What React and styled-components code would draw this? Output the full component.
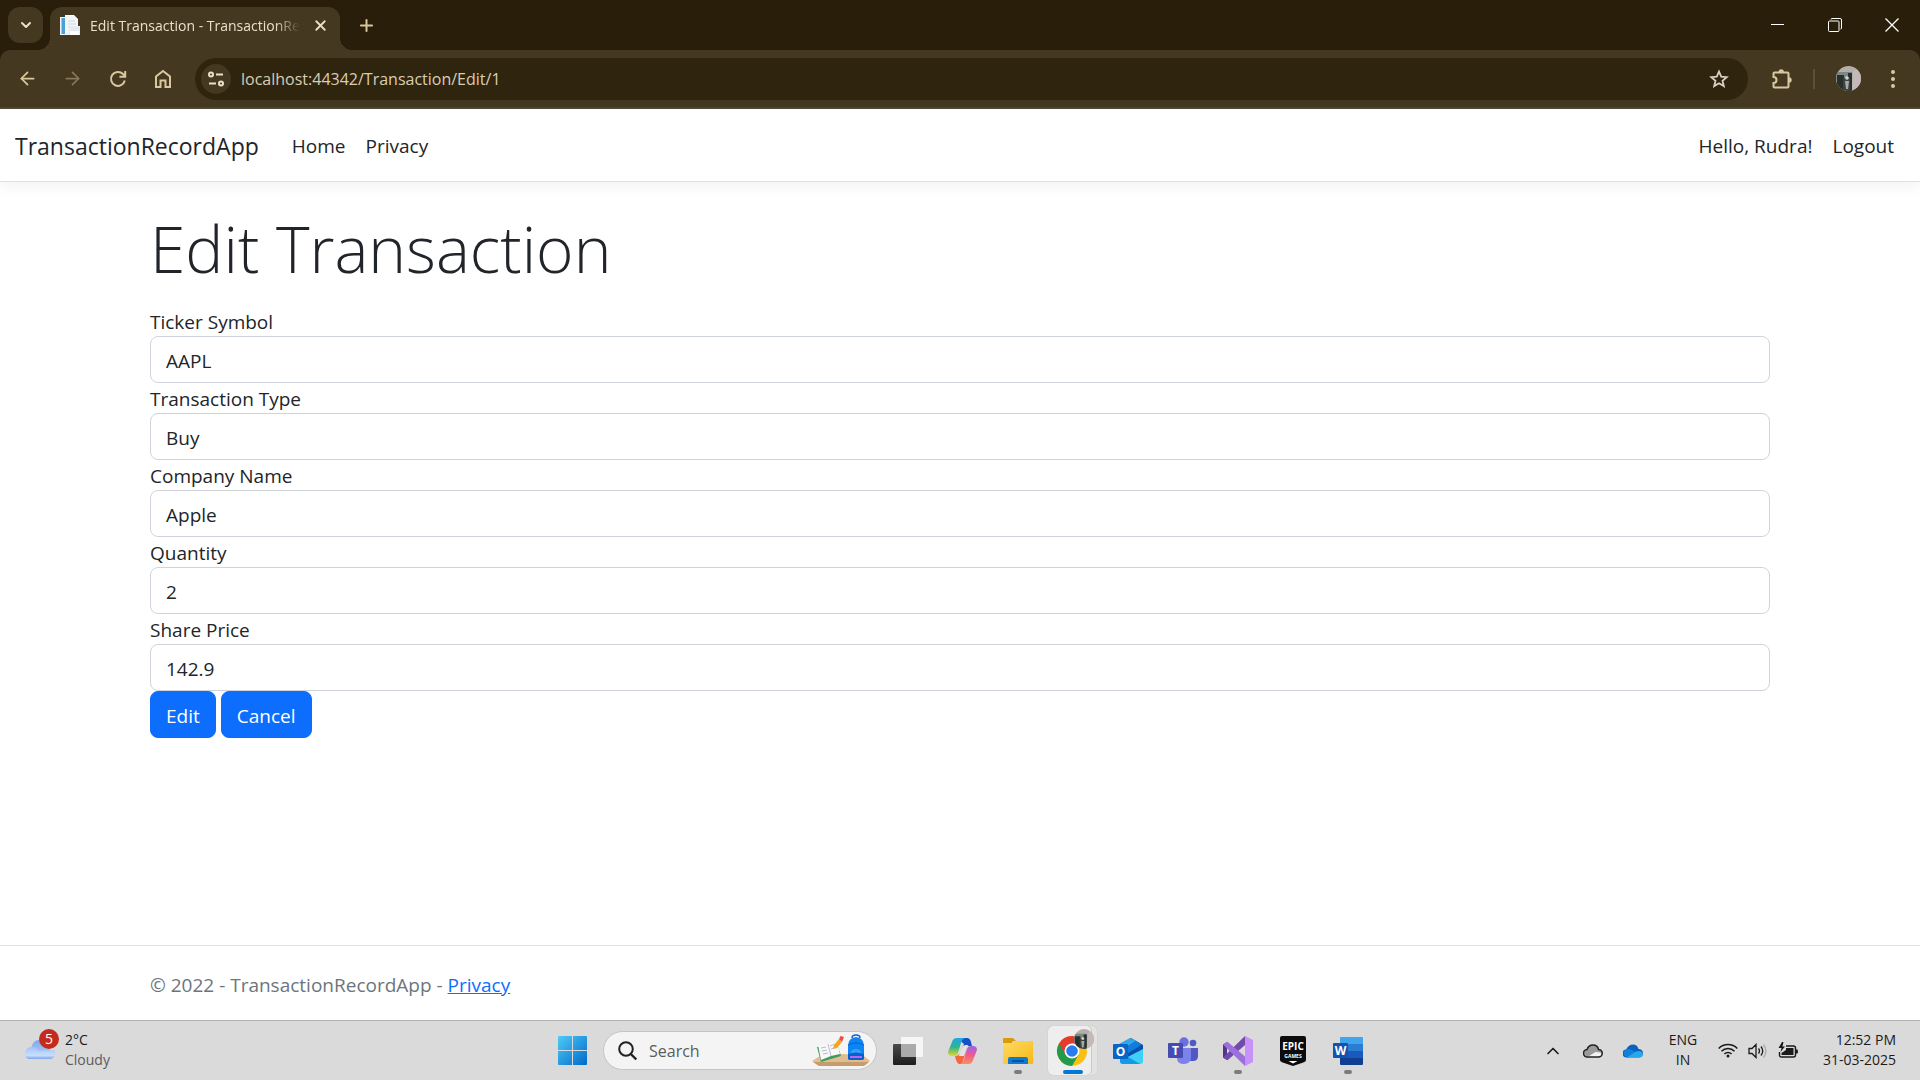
import React from 'react';
import styled, { createGlobalStyle } from 'styled-components';
import { ArrowLeft, ArrowRight, ChevronDown, ChevronUp, X, Plus } from 'lucide-react';

const uiFont = '"Open Sans", "Noto Sans", sans-serif';

const GlobalStyle = createGlobalStyle`
  *, *::before, *::after { box-sizing: border-box; }
  html, body, #root { height: 100%; }
  body { margin: 0; overflow: hidden; background: #fff; color: #212529; font-family: ${uiFont}; font-size: 19px; line-height: 30px; }
  button, input { font: inherit; color: inherit; }
  svg { display: block; flex: none; }
`;

const Desktop = styled.div`
  height: 100vh;
  display: flex;
  flex-direction: column;
`;

/* Browser chrome */

const TabStrip = styled.div`
  height: 50px;
  display: flex;
  align-items: center;
  padding: 0 0 0 8px;
  background: #281e0a;
  color: #e9dfcb;
  flex: none;
`;

const PlainButton = styled.button`
  width: ${(p) => p.$w || 36}px;
  height: ${(p) => p.$h || 36}px;
  padding: 0;
  border: 0;
  display: flex;
  align-items: center;
  justify-content: center;
  flex: none;
  background: ${(p) => p.$bg || 'transparent'};
  border-radius: ${(p) => p.$radius || 0}px;
  color: ${(p) => p.$color || 'inherit'};
`;

const Tab = styled.div`
  width: 290px;
  height: 43px;
  margin: 7px 0 0 7px;
  padding: 0 10px 6px;
  display: flex;
  align-items: center;
  gap: 10px;
  border-radius: 12px 12px 0 0;
  background: #453820;
  position: relative;
  &::before, &::after {
    content: '';
    position: absolute;
    bottom: 0;
    width: 12px;
    height: 12px;
  }
  &::before { left: -12px; background: radial-gradient(circle at 0 0, transparent 12px, #453820 12px); }
  &::after { right: -12px; background: radial-gradient(circle at 100% 0, transparent 12px, #453820 12px); }
`;

const TabTitle = styled.span`
  flex: 1;
  font-size: 14px;
  white-space: nowrap;
  overflow: hidden;
  mask-image: linear-gradient(90deg, #000 88%, transparent);
`;

const WindowControls = styled.div`
  display: flex;
  margin-left: auto;
  color: #fff;
`;

const ToolbarFrame = styled.div`
  background: #281e0a;
  flex: none;
`;

const Toolbar = styled.div`
  height: 59px;
  display: flex;
  align-items: center;
  padding: 0 0 0 5px;
  background: #453820;
  border-radius: 10px 10px 0 0;
  border-bottom: 2px solid #4f463a;
  color: #d8c8a0;
`;

const AddressBar = styled.div`
  flex: 1;
  height: 42px;
  margin-left: 10px;
  padding: 0 11px 0 6px;
  display: flex;
  align-items: center;
  gap: 10px;
  border-radius: 21px;
  background: #2f240e;
  color: #e9dfcb;
`;

const AddressInput = styled.input`
  flex: 1;
  min-width: 0;
  height: 30px;
  padding: 0;
  border: 0;
  outline: 0;
  background: transparent;
  color: #d9ceb4;
  font-size: 16px;
`;

const ToolbarEnd = styled.div`
  display: flex;
  align-items: center;
  padding-left: 16px;
`;

const Divider = styled.span`
  width: 2px;
  height: 20px;
  margin: 0 15px 0 13px;
  background: #5f5030;
`;

/* Page */

const Page = styled.div`
  flex: 1;
  min-height: 0;
  display: flex;
  flex-direction: column;
`;

const Navbar = styled.nav`
  height: 73px;
  padding: 2px 16px 0 15px;
  display: flex;
  align-items: center;
  border-bottom: 1px solid #dee2e6;
  box-shadow: 0 5px 15px rgba(0, 0, 0, 0.05);
  flex: none;
`;

const Brand = styled.a`
  margin-right: 23px;
  font-size: 23px;
  color: #212529;
  text-decoration: none;
`;

const NavItem = styled.a`
  padding: 0 10px;
  color: #212529;
  text-decoration: none;
`;

const NavEnd = styled.div`
  display: flex;
  margin-left: auto;
`;

const Container = styled.div`
  width: 100%;
  max-width: 1650px;
  margin: 0 auto;
  padding: 0 15px;
`;

const Main = styled.main`
  flex: 1;
  padding-top: 24px;
`;

const Title = styled.h1`
  margin: 0 0 14px;
  font-size: 64px;
  line-height: 86px;
  font-weight: 300;
`;

const Field = styled.div`
  display: flex;
  flex-direction: column;
  label { padding-top: 2px; line-height: 28px; }
`;

const Control = styled.input`
  width: 100%;
  height: 47px;
  padding: 3px 15px 0;
  border: 1px solid #ced4da;
  border-radius: 8px;
  background: #fff;
`;

const Actions = styled.div`
  display: flex;
  gap: 5px;
`;

const Action = styled.button`
  height: 47px;
  padding: 3px 15px 0;
  border: 1px solid #0d6efd;
  border-radius: 8px;
  background: #0d6efd;
  color: #fff;
`;

const Footer = styled.footer`
  height: 75px;
  display: flex;
  align-items: center;
  padding-top: 4px;
  border-top: 1px solid #dee2e6;
  color: #6c757d;
  flex: none;
  a { color: #0d6efd; }
`;

/* Taskbar */

const Taskbar = styled.div`
  height: 60px;
  display: grid;
  grid-template-columns: 1fr auto 1fr;
  align-items: center;
  background: #dadada;
  border-top: 1px solid #b0b0b0;
  color: #1b1b1b;
  font-size: 14px;
  line-height: 20px;
  flex: none;
`;

const Weather = styled.button`
  display: flex;
  align-items: center;
  gap: 5px;
  padding: 0 0 0 24px;
  border: 0;
  background: none;
  text-align: left;
`;

const WeatherIcon = styled.span`
  position: relative;
  width: 36px;
  height: 36px;
  margin-bottom: 8px;
`;

const Badge = styled.span`
  position: absolute;
  top: 0;
  right: 1px;
  width: 20px;
  height: 20px;
  border-radius: 10px;
  background: #c42b1c;
  color: #fff;
  font-size: 14px;
  text-align: center;
`;

const Lines = styled.span`
  display: flex;
  flex-direction: column;
  padding-bottom: 2px;
  text-align: ${(p) => p.$align || 'left'};
`;

const Muted = styled.span`
  color: #5c5c5c;
`;

const Apps = styled.div`
  display: flex;
  align-items: center;
  height: 59px;
`;

const SearchBox = styled.label`
  width: 274px;
  height: 39px;
  margin: 0 3px;
  padding: 0 6px 0 14px;
  display: flex;
  align-items: center;
  gap: 12px;
  border: 1px solid #c4c4c4;
  border-radius: 20px;
  background: #f4f4f4;
`;

const SearchInput = styled.input`
  flex: 1;
  min-width: 0;
  padding: 0;
  border: 0;
  outline: 0;
  background: transparent;
  font-size: 16px;
  &::placeholder { color: #5c5c5c; opacity: 1; }
`;

const AppButton = styled.button`
  position: relative;
  width: 49px;
  height: 49px;
  margin: 0 3px;
  padding: 0;
  border: 0;
  display: flex;
  align-items: center;
  justify-content: center;
  border-radius: 5px;
  background: ${(p) => (p.$active ? '#eeeeee' : 'transparent')};
  box-shadow: ${(p) => (p.$active ? 'inset -5px 0 0 #e2e2e2, inset -6px 0 0 #c9c9c9, 0 0 1px #aaa' : 'none')};
  &::after {
    content: '';
    position: absolute;
    bottom: 1px;
    width: ${(p) => (p.$active ? 20 : 8)}px;
    height: 4px;
    border-radius: 2px;
    background: ${(p) => (p.$active ? '#0078d4' : p.$open ? '#7c7c7c' : 'transparent')};
  }
`;

const Tray = styled.div`
  display: flex;
  align-items: center;
  justify-content: flex-end;
  padding-right: 24px;
`;

const TrayCell = styled.button`
  width: ${(p) => p.$w}px;
  padding: 0;
  border: 0;
  background: none;
  display: flex;
  justify-content: center;
`;

const Clock = styled.button`
  width: 93px;
  padding: 0;
  border: 0;
  background: none;
  display: flex;
  justify-content: flex-end;
`;

/* Drawings */

const Favicon = () => (
  <svg width="20" height="21" viewBox="0 0 20 21">
    <path d="M5 0h9l4 4v14H5z" fill="#fff" />
    <path d="M0 2h10v18H0z" fill="#f1f4f6" />
    <path d="M1.5 3h3.5v16H1.5z" fill="#4ba0d8" />
    <path d="M6 1h8l4 4v12H6z" fill="#f4f6f7" />
    <path d="M8 6h7M8 9h8M8 12h8" stroke="#cfd6db" />
    <path d="M10 11h10v9H8z" fill="#e4e8f0" />
    <path d="M10 16h9v4h-9z" fill="#fff" />
  </svg>
);

const Reload = () => (
  <svg width="18" height="18" viewBox="0 0 18 18" fill="none" stroke="currentColor" strokeWidth="2">
    <path d="M15.8 10.5A7 7 0 1 1 14 4l2 2M16.2 1v5.8h-5.8" />
  </svg>
);

const HomeIcon = () => (
  <svg width="18" height="20" viewBox="0 0 18 20" fill="none" stroke="currentColor" strokeWidth="2">
    <path d="M2 18V7.5L9 2l7 5.5V18h-4.5v-6.500h-5V18z" />
  </svg>
);

const Tune = () => (
  <svg width="16" height="16" viewBox="0 0 16 16" fill="none" stroke="currentColor" strokeWidth="2">
    <circle cx="3" cy="3.500" r="2" />
    <path d="M8 3.500h7M1 12.500h7" />
    <circle cx="13" cy="12.500" r="2" />
  </svg>
);

const StarIcon = () => (
  <svg width="20" height="20" viewBox="0 0 20 20" fill="none" stroke="#d9d0c2" strokeWidth="1.8">
    <path d="M10 2.500l2.200 5.100 5.500.5-4.200 3.600 1.300 5.400-4.800-2.900-4.800 2.900 1.300-5.400-4.200-3.600 5.500-.5z" />
  </svg>
);

const Puzzle = () => (
  <svg width="22" height="22" viewBox="0 0 22 22">
    <path d="M3.500 4.500h13a1 1 0 0 1 1 1v13a1 1 0 0 1-1 1h-13a1 1 0 0 1-1-1V15a3 3 0 0 0 0-6V5.500a1 1 0 0 1 1-1z" fill="none" stroke="currentColor" strokeWidth="2" />
    <path d="M7.500 4a2.700 2.700 0 0 1 5.400 0zM18 9.300a2.700 2.700 0 0 1 0 5.400z" fill="currentColor" />
  </svg>
);

const Avatar = ({ size }) => (
  <svg width={size} height={size} viewBox="0 0 25 25">
    <clipPath id={`face${size}`}><circle cx="12.500" cy="12.500" r="12.500" /></clipPath>
    <g clipPath={`url(#face${size})`}>
      <path d="M0 0h25v25H0z" fill="#b5adaa" />
      <path d="M0 6h16v19H0z" fill="#7c8780" />
      <path d="M1 9h7v16H1zM12 7h4v18h-4z" fill="#27302f" />
      <path d="M7 12h7v13H7z" fill="#3c4442" />
      <circle cx="11" cy="12" r="1.800" fill="#d5d5cf" />
      <path d="M9 15h4l-1 8h-2z" fill="#a9aaa5" />
      <path d="M17 5l8-3v23h-9z" fill="#c3b9b7" />
    </g>
  </svg>
);

const Dots = () => (
  <svg width="4" height="18" viewBox="0 0 4 18" fill="currentColor">
    <circle cx="2" cy="2" r="2" /><circle cx="2" cy="9" r="2" /><circle cx="2" cy="16" r="2" />
  </svg>
);

const CloudArt = () => (
  <svg width="32" height="36" viewBox="0 0 32 36">
    <defs>
      <linearGradient id="sky" x2="0" y2="1"><stop stopColor="#7fa8ec" /><stop offset="1" stopColor="#b9d3f9" /></linearGradient>
      <linearGradient id="puff" x2="0" y2="1"><stop stopColor="#a3c3f5" /><stop offset=".7" stopColor="#c8defb" /><stop offset="1" stopColor="#7fa4ec" /></linearGradient>
    </defs>
    <path d="M7 20C8 14 11 11 15 11c6 0 9 4 10 9a5 5 0 0 1 1 9H7z" fill="url(#sky)" />
    <path d="M1 25c0-4 3-7 6-7 4 0 6 2 8 4 5-1 9 0 16-1v3c0 4-2 6-6 6H6c-3 0-5-2-5-5z" fill="url(#puff)" />
  </svg>
);

const WindowsLogo = () => (
  <svg width="29" height="29" viewBox="0 0 29 29">
    <defs>
      <linearGradient id="win" x2="1" y2="1"><stop stopColor="#4fcbf8" /><stop offset="1" stopColor="#0069c9" /></linearGradient>
    </defs>
    <path d="M1 0H14v14H0V1A1 1 0 0 1 1 0zM15 0h13A1 1 0 0 1 29 1V14H15zM0 15h14V29H1A1 1 0 0 1 0 28zM15 15H29v13a1 1 0 0 1-1 1h-13z" fill="url(#win)" />
  </svg>
);

const SearchGlyph = () => (
  <svg width="19" height="20" viewBox="0 0 19 20" fill="none" stroke="#222" strokeWidth="2">
    <circle cx="8" cy="8" r="6.800" /><path d="M12.800 13l5.500 5.500" strokeWidth="2.400" />
  </svg>
);

const StudyArt = () => (
  <svg width="58" height="34" viewBox="0 0 58 34">
    <path d="M0 27l8-5q22-4 44 0l6 5-5 4H6z" fill="#e0bd93" />
    <path d="M1 28h56l-5 4H7z" fill="#c79b6c" />
    <path d="M5 13l20-4 4 13-20 6z" fill="#3f9c58" />
    <path d="M6 11l10-1 9-3 3 13-9 2-10 4z" fill="#f8f8fb" />
    <path d="M16 10l3 12M9 14l5-1M10 17l5-1M11 20l5-1M18 12l5-2M19 15l5-2" stroke="#b8bcc8" fill="none" />
    <path d="M21 15l1-4 5-6 3 3-5 6z" fill="#f8a51b" />
    <path d="M27 5l1.500-3 3.500 1-2 5z" fill="#ee4b4b" />
    <path d="M40 4q0-3 4-3t4 3" fill="none" stroke="#1460c8" strokeWidth="1.500" />
    <path d="M36 12q0-8 8-9 8 1 8 9v12q0 2-2 2H38q-2 0-2-2z" fill="#0b84f5" />
    <path d="M36 11q8-4 16 0" fill="none" stroke="#0a5fd0" />
    <path d="M38 22q0-7 6-7t6 7z" fill="#36a2fb" />
    <path d="M36 20q8-3 16 0v4q0 2-2 2H38q-2 0-2-2z" fill="#0a5fd0" />
    <path d="M38 22h12v2H38z" fill="#b46be8" />
  </svg>
);

const TaskView = () => (
  <svg width="30" height="30" viewBox="0 0 30 30">
    <defs>
      <linearGradient id="tv" x2="0" y2="1"><stop stopColor="#4a4a4a" /><stop offset="1" stopColor="#1c1c1c" /></linearGradient>
    </defs>
    <rect x="0" y="8" width="23" height="21" rx="1" fill="url(#tv)" />
    <rect x="8" y="1" width="22" height="20" rx="1" fill="#fff" opacity=".75" />
    <path d="M8 8h15v13H8z" fill="#9b9b9b" opacity=".7" />
  </svg>
);

const Copilot = () => (
  <svg width="30" height="28" viewBox="0 0 30 28">
    <defs>
      <linearGradient id="cpa" x2="0" y2="1"><stop stopColor="#1fa8e0" /><stop offset=".5" stopColor="#2bb58f" /><stop offset="1" stopColor="#e9d52a" /></linearGradient>
      <linearGradient id="cpb" x2="0" y2="1"><stop stopColor="#9a63ee" /><stop offset=".5" stopColor="#ee5a92" /><stop offset="1" stopColor="#f9935a" /></linearGradient>
    </defs>
    <path d="M9 1h10q3 0 4 4l1 4h-5q-3 0-4 3l-3 5 4-10z" fill="#1650c8" />
    <path d="M9 1h8q-3 1-4 5l-3 10q-1 3-4 3H4q-4 0-4-4L4 5q1-4 5-4z" fill="url(#cpa)" />
    <path d="M7 19q4 0 5-3l2-5h5l-5 16h-3q-2-1-3-4z" fill="#f3683b" />
    <path d="M12 15l2-4q1-3 4-3h2l-4 11h-5z" fill="#e4e1e4" />
    <path d="M21 27h-9q3-1 4-5l3-10q1-3 4-3h2q4 0 4 4l-4 10q-1 4-4 4z" fill="url(#cpb)" />
  </svg>
);

const Folder = () => (
  <svg width="30" height="28" viewBox="0 0 30 28">
    <defs>
      <linearGradient id="fo" x2="1" y2="1"><stop stopColor="#ffda65" /><stop offset="1" stopColor="#f7b915" /></linearGradient>
    </defs>
    <path d="M0 2q0-1 1-1h9l3 3h-3l-2 3H0z" fill="#d89b0b" />
    <path d="M0 6h9l3-2h17q1 0 1 1v21q0 1-1 1H1q-1 0-1-1z" fill="url(#fo)" />
    <path d="M5 27v-5q0-2 2-2h16q2 0 2 2v5z" fill="#0f7ad1" />
    <path d="M9 24h12" stroke="#07498c" strokeWidth="1.500" />
  </svg>
);

const Chrome = () => (
  <svg width="38" height="38" viewBox="0 0 38 38">
    <g transform="translate(0 2)">
      <circle cx="18" cy="17" r="15" fill="#fbbf12" />
      <path d="M18 17L5 9.500A15 15 0 0 0 18 32l6.500-11z" fill="#229a4c" />
      <path d="M18 17l-6.500 3.800L5 9.500A15 15 0 0 1 31 9.500H18z" fill="#e33b2e" />
      <circle cx="18" cy="17" r="7.500" fill="#fff" />
      <circle cx="18" cy="17" r="5.800" fill="#2a7bec" />
    </g>
  </svg>
);

const ProfileBadge = styled.span`
  position: absolute;
  top: 3px;
  right: 3px;
`;

const glyphFont = { fontFamily: uiFont, fontWeight: 700, fill: '#fff', textAnchor: 'middle' };

const Outlook = () => (
  <svg width="30" height="28" viewBox="0 0 30 28">
    <path d="M7 7L18 1l12 7v6L10 23z" fill="#0b50a8" />
    <path d="M6 7l11-6 6 3-14 9z" fill="#35a5ea" />
    <path d="M9 13l14-9 6 3.500-16 10z" fill="#0f7ddb" />
    <path d="M30 12v12q0 3-3 3H10q-3 0-3-3z" fill="#3fd0f8" />
    <path d="M7 15l20 12H10q-3 0-3-3z" fill="#169ae5" />
    <rect x="0" y="7" width="15" height="15" rx="1" fill="#0a64c4" />
    <text x="7.500" y="19" fontSize="12" {...glyphFont}>O</text>
  </svg>
);

const Teams = () => (
  <svg width="30" height="28" viewBox="0 0 30 28">
    <circle cx="16" cy="5" r="4.700" fill="#6a70df" /><circle cx="25" cy="6" r="3.300" fill="#5058c4" />
    <path d="M22 11h8v8q0 5-5 5h-4z" fill="#5058c4" />
    <path d="M9 11h14v9q0 7-7 7t-7-6z" fill="#7b83eb" />
    <rect x="0" y="6" width="15" height="15" rx="1" fill="#464bb4" />
    <text x="7.500" y="18" fontSize="12" {...glyphFont}>T</text>
  </svg>
);

const VisualStudio = () => (
  <svg width="30" height="30" viewBox="0 0 30 30">
    <path d="M0 8.500L4 6v18l-4-2.500z" fill="#52358a" />
    <path d="M4 11.500l3.500 3.500L4 18.500z" fill="#dadada" />
    <path d="M22 0v9L4.500 24.200 0 21.500z" fill="#7449ac" />
    <path d="M0 8.500L4.500 5.800 22 20.500V30z" fill="#9d6fdc" />
    <path d="M22 0l8 4v22l-8 4z" fill="#c790fa" />
  </svg>
);

const Epic = () => (
  <svg width="26" height="30" viewBox="0 0 26 30">
    <path d="M2 0h22q2 0 2 2v22q0 1.500-2 2.300L13 30 2 26.300Q0 25.500 0 24V2q0-2 2-2z" fill="#0b0b0b" />
    <path d="M8.500 25h9L13 27.500z" fill="#fff" />
    <text x="13" y="14" fontSize="10" {...glyphFont}>EPIC</text>
    <text x="13" y="22" fontSize="5" {...glyphFont}>GAMES</text>
  </svg>
);

const Word = () => (
  <svg width="30" height="28" viewBox="0 0 30 28">
    <path d="M7 1q0-1 1-1h21q1 0 1 1v6H7z" fill="#41a5ee" />
    <path d="M7 7h23v7H7z" fill="#2b7cd3" /><path d="M7 14h23v7H7z" fill="#185abd" /><path d="M7 21h23v6q0 1-1 1H8q-1 0-1-1z" fill="#103f91" />
    <rect x="0" y="6" width="15" height="15" rx="1" fill="#1552ae" />
    <text x="7.500" y="18" fontSize="12" {...glyphFont}>W</text>
  </svg>
);

const CloudTray = ({ blue }) => (
  <svg width="20" height="14" viewBox="0 0 20 14">
    {blue ? (
      <>
        <path d="M4 13.500a4 4 0 0 1-1-8C5 2 7 .5 10 .5c3 0 5 2 5.500 4.500A4 4 0 0 1 16 13.500z" fill="#0a62bd" />
        <path d="M4 13.500a4 4 0 0 1 2.500-8.500L17 10z" fill="#1180d8" />
        <path d="M4 13.500l9-6q6-2 7 3 0 3-4 3z" fill="#28a8ea" />
      </>
    ) : (
      <>
        <path d="M4.500 13a3.700 3.700 0 0 1-.5-7.500C5 2.500 7 1 10 1c3 0 5 2 5.500 4.500A3.700 3.700 0 0 1 15.500 13z" fill="#9b9b9b" />
        <path d="M4.500 13l8-5q6 0 6 2 0 3-3 3z" fill="#f2f2f2" />
        <path d="M4.500 13a3.700 3.700 0 0 1-.5-7.500C5 2.500 7 1 10 1c3 0 5 2 5.500 4.500A3.700 3.700 0 0 1 15.500 13z" fill="none" stroke="#222" strokeWidth="1.500" />
      </>
    )}
  </svg>
);

const Wifi = () => (
  <svg width="20" height="15" viewBox="0 0 20 15" fill="none" stroke="#1b1b1b" strokeWidth="1.500">
    <path d="M.7 5.500a13 13 0 0 1 18.600 0M3.500 8.300a9 9 0 0 1 13 0M6.400 11a5 5 0 0 1 7.200 0" />
    <circle cx="10" cy="13" r="1.500" fill="#1b1b1b" stroke="none" />
  </svg>
);

const Volume = () => (
  <svg width="20" height="16" viewBox="0 0 20 16" fill="none" stroke="#1b1b1b" strokeWidth="1.300">
    <path d="M1 5.500h3L8 1.500v13l-4-4H1zM10.500 5.500q2 2.500 0 5M13 3.500q3.500 4.500 0 9" />
    <path d="M15.500 1.500q5 6.500 0 13" stroke="#aaa" />
  </svg>
);

const Battery = () => (
  <svg width="21" height="17" viewBox="0 0 21 17">
    <path d="M8 4h7.500q2 0 2 2v7q0 2-2 2H3.500q-2 0-2-2v-3" fill="none" stroke="#1b1b1b" strokeWidth="1.400" />
    <path d="M8 6h7.500v7h-12v-2L8 8z" fill="#1b1b1b" /><path d="M18 7.500h1.500q1 2 0 4H18z" fill="#1b1b1b" />
    <path d="M4 0L.5 6h3L2.500 10 7 4.500H4.500L5.500 0z" fill="#1b1b1b" />
  </svg>
);

const fields = [
  ['ticker', 'Ticker Symbol', 'AAPL'],
  ['type', 'Transaction Type', 'Buy'],
  ['company', 'Company Name', 'Apple'],
  ['quantity', 'Quantity', '2'],
  ['price', 'Share Price', '142.9'],
];

const apps = [
  ['Task View', TaskView],
  ['Copilot', Copilot],
  ['File Explorer', Folder, 'open'],
  ['Google Chrome', Chrome, 'active'],
  ['Outlook', Outlook],
  ['Teams', Teams],
  ['Visual Studio', VisualStudio, 'open'],
  ['Epic Games', Epic],
  ['Word', Word, 'open'],
];

export default function App() {
  return (
    <Desktop>
      <GlobalStyle />
      <TabStrip>
        <PlainButton $w={35} $bg="#453820" $radius={12} aria-label="Search tabs"><ChevronDown size={16} strokeWidth={3} /></PlainButton>
        <Tab>
          <Favicon />
          <TabTitle>Edit Transaction - TransactionRecordApp</TabTitle>
          <PlainButton $w={20} $h={20} aria-label="Close tab"><X size={17} strokeWidth={2.500} /></PlainButton>
        </Tab>
        <PlainButton $w={52} $color="#d8c8a0" aria-label="New tab"><Plus size={19} strokeWidth={2.500} /></PlainButton>
        <WindowControls>
          <PlainButton $w={57} aria-label="Minimize"><svg width="13" height="13"><path d="M0 5.500h13" stroke="#fff" /></svg></PlainButton>
          <PlainButton $w={57} aria-label="Restore">
            <svg width="14" height="14" fill="none" stroke="#fff"><rect x=".5" y="3" width="10.500" height="10.500" rx="1" /><path d="M3 1.500q0-1 1-1h8q1.500 0 1.500 1.500v8q0 1-1 1" /></svg>
          </PlainButton>
          <PlainButton $w={57} aria-label="Close"><svg width="14" height="14"><path d="M.5.500l13 13M13.500.500l-13 13" stroke="#fff" strokeWidth="1.300" /></svg></PlainButton>
        </WindowControls>
      </TabStrip>
      <ToolbarFrame>
        <Toolbar>
          <PlainButton $w={45} aria-label="Back"><ArrowLeft size={21} /></PlainButton>
          <PlainButton $w={45} $color="#857757" aria-label="Forward"><ArrowRight size={21} /></PlainButton>
          <PlainButton $w={45} aria-label="Reload"><Reload /></PlainButton>
          <PlainButton $w={45} aria-label="Home"><HomeIcon /></PlainButton>
          <AddressBar>
            <PlainButton $w={30} $h={30} $bg="#453820" $radius={15} aria-label="Site information"><Tune /></PlainButton>
            <AddressInput aria-label="Address" defaultValue="localhost:44342/Transaction/Edit/1" />
            <PlainButton aria-label="Bookmark"><StarIcon /></PlainButton>
          </AddressBar>
          <ToolbarEnd>
            <PlainButton aria-label="Extensions"><Puzzle /></PlainButton>
            <Divider />
            <PlainButton aria-label="Profile"><Avatar size={25} /></PlainButton>
            <PlainButton $w={54} aria-label="Menu"><Dots /></PlainButton>
          </ToolbarEnd>
        </Toolbar>
      </ToolbarFrame>

      <Page>
        <Navbar>
          <Brand href="#">TransactionRecordApp</Brand>
          <NavItem href="#">Home</NavItem>
          <NavItem href="#">Privacy</NavItem>
          <NavEnd>
            <NavItem as="span">Hello, Rudra!</NavItem>
            <NavItem href="#">Logout</NavItem>
          </NavEnd>
        </Navbar>
        <Main>
          <Container>
            <Title>Edit Transaction</Title>
            <form onSubmit={(e) => e.preventDefault()}>
              {fields.map(([id, label, value]) => (
                <Field key={id}>
                  <label htmlFor={id}>{label}</label>
                  <Control id={id} defaultValue={value} />
                </Field>
              ))}
              <Actions>
                <Action type="submit">Edit</Action>
                <Action type="button">Cancel</Action>
              </Actions>
            </form>
          </Container>
        </Main>
        <Footer>
          <Container>© 2022 - TransactionRecordApp - <a href="#">Privacy</a></Container>
        </Footer>
      </Page>

      <Taskbar>
        <Weather>
          <WeatherIcon><CloudArt /><Badge>5</Badge></WeatherIcon>
          <Lines><span>2°C</span><Muted>Cloudy</Muted></Lines>
        </Weather>
        <Apps>
          <AppButton aria-label="Start"><WindowsLogo /></AppButton>
          <SearchBox>
            <SearchGlyph />
            <SearchInput type="text" placeholder="Search" aria-label="Search" />
            <StudyArt />
          </SearchBox>
          {apps.map(([name, Icon, state]) => (
            <AppButton key={name} aria-label={name} $active={state === 'active'} $open={state === 'open'}>
              <Icon />
              {state === 'active' && <ProfileBadge><Avatar size={20} /></ProfileBadge>}
            </AppButton>
          ))}
        </Apps>
        <Tray>
          <TrayCell $w={40} aria-label="Show hidden icons"><ChevronUp size={20} /></TrayCell>
          <TrayCell $w={40} aria-label="Cloud"><CloudTray /></TrayCell>
          <TrayCell $w={40} aria-label="OneDrive"><CloudTray blue /></TrayCell>
          <TrayCell $w={60}><Lines $align="center"><span>ENG</span><span>IN</span></Lines></TrayCell>
          <TrayCell $w={30} aria-label="Wi-Fi"><Wifi /></TrayCell>
          <TrayCell $w={30} aria-label="Volume"><Volume /></TrayCell>
          <TrayCell $w={30} aria-label="Battery"><Battery /></TrayCell>
          <Clock><Lines $align="right"><span>12:52 PM</span><span>31-03-2025</span></Lines></Clock>
        </Tray>
      </Taskbar>
    </Desktop>
  );
}
